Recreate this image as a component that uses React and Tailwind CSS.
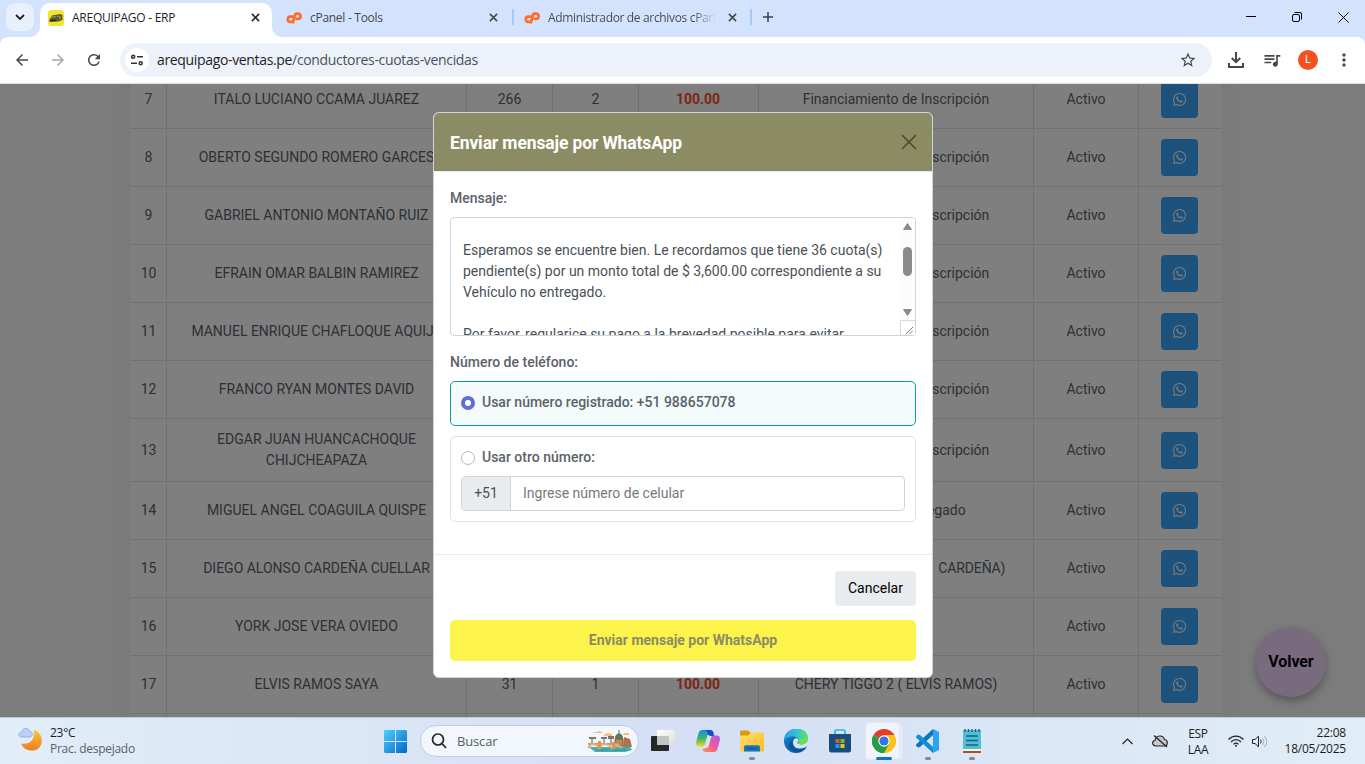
import React from "react";
import { FaWhatsapp } from "react-icons/fa";
import { MdStarBorder, MdQueueMusic, MdMoreVert, MdRefresh, MdArrowBack, MdArrowForward } from "react-icons/md";

const INS = "Financiamiento de Inscripción";

const rows = [
  { n: 7, name: "ITALO LUCIANO CCAMA JUAREZ", code: "266", due: "2", amount: "100.00", item: INS },
  { n: 8, name: "OBERTO SEGUNDO ROMERO GARCES", item: INS },
  { n: 9, name: "GABRIEL ANTONIO MONTAÑO RUIZ", item: INS },
  { n: 10, name: "EFRAIN OMAR BALBIN RAMIREZ", item: INS },
  { n: 11, name: "MANUEL ENRIQUE CHAFLOQUE AQUIJE", item: INS },
  { n: 12, name: "FRANCO RYAN MONTES DAVID", item: INS },
  { n: 13, name: "EDGAR JUAN HUANCACHOQUE CHIJCHEAPAZA", item: INS, tall: true },
  { n: 14, name: "MIGUEL ANGEL COAGUILA QUISPE", item: "Vehículo no entregado" },
  { n: 15, name: "DIEGO ALONSO CARDEÑA CUELLAR", item: "CHERY TIGGO 2 (DIEGO  CARDEÑA)", tight: true },
  { n: 16, name: "YORK JOSE VERA OVIEDO", item: "" },
  { n: 17, name: "ELVIS RAMOS SAYA", code: "31", due: "1", amount: "100.00", item: "CHERY TIGGO 2 ( ELVIS RAMOS)" },
];

function Close({ className }) {
  return (
    <svg viewBox="0 0 10 10" className={className} fill="none" stroke="currentColor" strokeWidth="1.7">
      <path d="M1 1l8 8M9 1l-8 8" />
    </svg>
  );
}

function CpanelLogo({ className }) {
  return (
    <svg viewBox="0 0 16 12" className={className} fill="none" stroke="#ff6c2c" strokeWidth="2.700" strokeLinecap="round" strokeLinejoin="round">
      <path d="M6.600 4.600H4.200a2.700 2.700 0 0 0-.4 5.300h1.700" />
      <path d="M7 10.300L9 2.600Q9.300 1.700 10.300 1.700h1.600a2.600 2.600 0 0 1 .2 5.200h-1.400" />
    </svg>
  );
}

function TabStrip() {
  return (
    <div className="flex h-[37px] shrink-0 bg-[#d3e3fd] font-['Open_Sans',sans-serif] text-[12px] text-[#45474a]">
      <div className="ml-[6px] mt-[3px] flex h-7 w-7 items-center justify-center rounded-[9px] bg-[#e9f0fd] text-[#1f1f1f]">
        <svg viewBox="0 0 10 6" className="h-[6px] w-[10px]" fill="none" stroke="currentColor" strokeWidth="1.8">
          <path d="M1 1l4 4 4-4" />
        </svg>
      </div>
      <div className="relative ml-[6px] mt-[3px] flex h-[34px] w-[232px] items-center rounded-t-[10px] bg-white pb-[5px] text-[#1f1f1f]">
        <svg className="absolute -left-[10px] bottom-0 h-[10px] w-[10px]" viewBox="0 0 10 10"><path d="M10 0v10H0A10 10 0 0 0 10 0z" fill="#fff" /></svg>
        <svg className="absolute -right-[10px] bottom-0 h-[10px] w-[10px]" viewBox="0 0 10 10"><path d="M0 0v10h10A10 10 0 0 1 0 0z" fill="#fff" /></svg>
        <svg className="ml-2 h-4 w-4" viewBox="0 0 16 16">
          <rect width="16" height="16" rx="3" fill="#f2e530" />
          <path d="M1.500 9.500L4 5.500l8-1.500 2.500 1v5l-4 1.500-9 .5z" fill="#5b5a35" />
          <path d="M3.500 8l2-2M6.500 7.500l1-1.500M9.500 7l1-1.500M12 9V6" stroke="#c9c36a" strokeWidth=".9" />
          <path d="M2 10.500h6" stroke="#222" strokeWidth="1.200" />
        </svg>
        <span className="ml-2 whitespace-nowrap tracking-[-0.26px]">AREQUIPAGO - ERP</span>
        <Close className="ml-auto mr-[12px] h-[9px] w-[9px]" />
      </div>
      <div className="flex h-[35px] w-[240px] items-center">
        <CpanelLogo className="ml-[14px] h-3 w-4" />
        <span className="ml-2 whitespace-nowrap tracking-[-0.28px]">cPanel - Tools</span>
        <Close className="ml-auto mr-[14px] h-[9px] w-[9px]" />
      </div>
      <div className="mt-[9px] h-4 w-[2px] bg-[#a8c7fa]" />
      <div className="flex h-[35px] w-[236px] items-center">
        <CpanelLogo className="ml-[10px] h-3 w-4" />
        <span className="ml-2 w-[168px] overflow-hidden whitespace-nowrap bg-gradient-to-r from-[#45474a] from-[86%] to-transparent bg-clip-text tracking-[-0.34px] text-transparent">Administrador de archivos cPan</span>
        <Close className="ml-[12px] h-[9px] w-[9px]" />
      </div>
      <div className="mt-[9px] h-4 w-[2px] bg-[#a8c7fa]" />
      <svg className="ml-[11px] mt-[12px] h-[10px] w-[10px]" viewBox="0 0 10 10" stroke="#3c4043" strokeWidth="1.500"><path d="M5 0v10M0 5h10" /></svg>
      <div className="ml-auto mr-[16px] flex h-[34px] items-center gap-[36px] text-black">
        <svg className="h-[10px] w-[10px]" viewBox="0 0 10 10" stroke="currentColor"><path d="M0 4.500h10" /></svg>
        <svg className="h-[10px] w-[10px]" viewBox="0 0 10 10" stroke="currentColor" fill="none"><rect x=".5" y="2.500" width="7" height="7" rx="1.500" /><path d="M2.500.5H8A1.500 1.500 0 0 1 9.500 2v5.500" /></svg>
        <svg className="h-[11px] w-[11px]" viewBox="0 0 11 11" stroke="currentColor"><path d="M.5.5l10 10M10.500.5l-10 10" /></svg>
      </div>
    </div>
  );
}

function Toolbar() {
  return (
    <div className="h-[47px] shrink-0 bg-[#d3e3fd]">
      <div className="flex h-full items-center rounded-t-[8px] border-b border-[#dcdde0] bg-white text-[#45484b]">
        <MdArrowBack className="ml-[13px] h-[18px] w-[18px]" />
        <MdArrowForward className="ml-[18px] h-[18px] w-[18px] text-[#a6a7a9]" />
        <MdRefresh className="ml-[18px] h-[18px] w-[18px]" />
        <div className="ml-[17px] flex h-[34px] w-[1092px] items-center rounded-full bg-[#ecf1fa]">
          <div className="ml-[5px] flex h-6 w-6 items-center justify-center rounded-full bg-white">
            <svg className="h-3 w-3" viewBox="0 0 12 12" fill="none" stroke="#333" strokeWidth="1.500">
              <circle cx="2.200" cy="2.800" r="1.500" /><path d="M6 2.800h6M0 9.200h6" /><circle cx="9.700" cy="9.200" r="1.500" />
            </svg>
          </div>
          <span className="ml-2 whitespace-nowrap pb-px font-['Open_Sans',sans-serif] text-[14px] tracking-[-0.34px] text-[#4d5156]">
            <span className="text-[#1f1f1f]">arequipago-ventas.pe</span>/conductores-cuotas-vencidas
          </span>
          <MdStarBorder className="ml-auto mr-[15px] h-[18px] w-[18px]" />
        </div>
        <svg className="ml-[16px] h-4 w-4" viewBox="0 0 16 16" fill="none" stroke="currentColor" strokeWidth="2">
          <path d="M8 0v10M3.800 6L8 10.200 12.200 6M1 11v4h14v-4" />
        </svg>
        <MdQueueMusic className="ml-[18px] h-5 w-5" />
        <div className="ml-[16px] flex h-5 w-5 items-center justify-center rounded-full bg-[#f4511e] font-[Roboto,sans-serif] text-[11px] text-white">L</div>
        <MdMoreVert className="ml-[16px] h-5 w-5" />
      </div>
    </div>
  );
}

function Cell({ children, className = "" }) {
  return <div className={`flex h-full items-center justify-center border-r border-[#dee2e6] text-center ${className}`}>{children}</div>;
}

function DebtTable() {
  return (
    <div className="ml-[130px] w-[1092px] bg-white pl-px pr-px shadow-[0_0_13px_0_rgba(236,236,241,0.9)]">
      <div className="flex flex-col font-[Roboto,sans-serif] text-[14px] leading-[21px] text-[#5b626b]">
        {rows.map((r) => (
          <div key={r.n} className={`grid grid-cols-[36px_300px_86px_86px_120px_275px_105px_82px] items-center border-b border-[#dee2e6] ${r.tall ? "h-[63px]" : "h-[58px]"}`}>
            <Cell>{r.n}</Cell>
            <Cell className={r.tall ? "px-[40px]" : "whitespace-nowrap"}>{r.name}</Cell>
            <Cell>{r.code}</Cell>
            <Cell>{r.due}</Cell>
            <Cell className="pr-px font-bold text-[#ff4a2a]">{r.amount}</Cell>
            <Cell className={r.tight ? "whitespace-pre tracking-[-0.13px]" : ""}>{r.item}</Cell>
            <Cell>Activo</Cell>
            <div className="flex justify-center pr-px">
              <div className={`flex h-[37px] w-[37px] items-center justify-center rounded-[4px] bg-[#38a4f8] text-[#f4f4f4] ${r.tall ? "" : "mb-px"}`}>
                <FaWhatsapp className="h-[15px] w-[15px]" />
              </div>
            </div>
          </div>
        ))}
        <div className="grid h-[58px] grid-cols-[36px_300px_86px_86px_120px_275px_105px_82px]">
          <Cell /><Cell /><Cell /><Cell /><Cell /><Cell /><Cell />
        </div>
      </div>
    </div>
  );
}

function MessageBox() {
  return (
    <div className="mt-[8px] flex h-[119px] overflow-hidden rounded-[4px] border border-[#ced4da] bg-white">
      <div className="flex-1 whitespace-nowrap pl-3 pt-[22px] text-[14px] leading-[21px] text-[#495057]">
        <p>Esperamos se encuentre bien. Le recordamos que tiene 36 cuota(s)</p>
        <p>pendiente(s) por un monto total de $ 3,600.00 correspondiente a su</p>
        <p>Vehículo no entregado.</p>
        <p className="mt-[21px]">Por favor, regularice su pago a la brevedad posible para evitar</p>
      </div>
      <div className="flex w-[15px] flex-col items-center bg-[#fcfcfc]">
        <svg className="mt-[5px] h-[7px] w-[9px]" viewBox="0 0 9 7"><path d="M4.500 0.500L8.500 6.500h-8z" fill="#8b8b8b" stroke="#8b8b8b" strokeLinejoin="round" /></svg>
        <div className="mt-[17px] h-[29px] w-[9px] rounded-full bg-[#8b8b8b]" />
        <svg className="mt-[33px] h-[7px] w-[9px]" viewBox="0 0 9 7"><path d="M4.500 6.500L.5.5h8z" fill="#8b8b8b" stroke="#8b8b8b" strokeLinejoin="round" /></svg>
        <div className="mt-[4px] h-[15px] w-[15px] border-l border-t border-[#d9d9d9] bg-white">
          <svg className="ml-[5px] mt-[6px] h-[7px] w-[7px]" viewBox="0 0 8 8" stroke="#555" strokeWidth=".9"><path d="M0 8L8 0M4 8l4-4" /></svg>
        </div>
      </div>
    </div>
  );
}

function Modal() {
  return (
    <div className="absolute left-[433px] top-[28px] h-[566px] w-[500px] overflow-hidden rounded-[6px] border border-[#d4d5d6] bg-white font-[Roboto,sans-serif] text-[14px] leading-[21px] text-[#5b626b]">
      <div className="flex h-[59px] items-center justify-between border-b border-[#e9ecef] bg-[#8b8c64] pl-4 pr-[15px]">
        <h5 className="whitespace-nowrap pt-[2px] text-[17.500px] font-bold tracking-[-0.13px] text-white">Enviar mensaje por WhatsApp</h5>
        <svg className="h-4 w-4" viewBox="0 0 16 16" stroke="#46472f" strokeWidth="1.500" strokeLinecap="round"><path d="M1.500 1.500l13 13M14.500 1.500l-13 13" /></svg>
      </div>
      <div className="px-4 pt-4">
        <div className="font-medium">Mensaje:</div>
        <MessageBox />
        <div className="mt-4 font-medium">Número de teléfono:</div>
        <div className="mt-2 flex h-[45px] items-start rounded-[5px] border border-[#02a499] bg-[#f5fbfa] pl-[10px] pt-[10px]">
          <div className="mt-[4px] h-[14px] w-[14px] rounded-full border-4 border-[#626ed4] bg-white" />
          <span className="ml-[7px] font-medium">Usar número registrado: +51 988657078</span>
        </div>
        <div className="mt-[10px] h-[86px] rounded-[5px] border border-[#dee2e6] p-[10px]">
          <div className="flex">
            <div className="mt-[4px] h-[14px] w-[14px] rounded-full border border-[#b9bbbd] bg-white" />
            <span className="ml-[7px] font-medium">Usar otro número:</span>
          </div>
          <div className="mt-[8px] flex h-[35px] overflow-hidden rounded-[4px] border border-[#ced4da]">
            <div className="flex w-[49px] items-center justify-center border-r border-[#ced4da] bg-[#e9ecef] text-[#495057]">+51</div>
            <div className="flex items-center pl-3 text-[#74797e]">Ingrese número de celular</div>
          </div>
        </div>
      </div>
      <div className="mt-8 border-t border-[#e9ecef] px-4 pt-4">
        <div className="ml-auto flex h-[35px] w-[81px] items-center justify-center rounded-[4px] bg-[#e9ecef] text-black">Cancelar</div>
        <div className="mt-[14px] flex h-[41px] items-center justify-center rounded-[5px] bg-[#fcf34b] font-bold text-[#8b8c64]">Enviar mensaje por WhatsApp</div>
      </div>
    </div>
  );
}

function WeatherIcon() {
  return (
    <svg className="h-6 w-6" viewBox="0 0 24 24">
      <defs><linearGradient id="moon" x1="0" y1="0" x2="0" y2="1"><stop offset="0" stopColor="#fbc63d" /><stop offset="1" stopColor="#ee7d1e" /></linearGradient></defs>
      <path d="M15.500 2c10.500 2 11 17 2 20C11.500 24 5 21 3 15.500c9 2 14.500-4.500 12.500-13.500z" fill="url(#moon)" />
      <path d="M3.500 9C-.5 8.500 .5 4.300 3.500 4.500 5-1 10-.8 11 3c4 .2 4.500 5.500 1 6z" fill="#b9d0f5" stroke="#789fe5" strokeWidth=".7" />
    </svg>
  );
}

function SearchArt() {
  return (
    <svg className="h-[23px] w-[46px]" viewBox="0 0 46 23">
      <path d="M7 2h3l2-1 3 1v1H7zM17 5l3-2 5 1v2h-8zM37 3h5v2h-6z" fill="#f8bc78" />
      <path d="M2 17h41l2 3-7 2H8z" fill="#48aeb5" />
      <path d="M5 15V8M17 15V8M24 14V8" stroke="#665448" />
      <path d="M2 7h7v2H2zM14 7h6v2h-6zM21 6h6v3h-6z" fill="#7b776b" />
      <path d="M28 16V8c0-6 8-6 8 0v8z" fill="#557b58" /><path d="M32 0v4M28 9h8v7h-8z" stroke="#796044" fill="#c48355" />
      <path d="M37 7l6 2 2 8H36z" fill="#b86a50" /><path d="M1 13h30v2H1z" fill="#cf9676" />
      <path d="M1 18c3-5 8-5 11 0 3-5 9-5 13 0 3-4 6-4 9 0" fill="none" stroke="#e4b278" strokeWidth="2" />
      <path d="M11 11h3v9h-3zM25 12h3v8h-3z" fill="#d99956" /><path d="M10 20h12M25 20h14" stroke="#2c939d" />
      <circle cx="41" cy="15" r="2" fill="#6c9951" />
    </svg>
  );
}

function TaskIcon({ children, dot }) {
  return (
    <div className="relative flex h-[47px] w-[44px] shrink-0 items-center justify-center">
      {children}
      {dot && <div className="absolute bottom-[5px] left-[19px] h-[3px] w-[6px] rounded-full bg-[#858991]" />}
    </div>
  );
}

function Taskbar() {
  return (
    <div className="flex h-[47px] shrink-0 items-center border-t border-[#bfc9d8] bg-gradient-to-r from-[#e1edf7] via-[#d5dff5] to-[#e1edf6] font-['Open_Sans',sans-serif] text-[12px] text-[#1c1c1c]">
      <div className="flex w-[373px] items-center pl-[18px] pb-[2px]">
        <WeatherIcon />
        <div className="ml-[8px] pt-[2px] leading-[16px] tracking-[-0.27px]"><div>23°C</div><div className="text-[#5c6066]">Prac. despejado</div></div>
      </div>
      <TaskIcon>
        <svg className="h-[23px] w-[23px]" viewBox="0 0 23 23">
          <defs><linearGradient id="win" x1="0" y1="0" x2="1" y2="1"><stop stopColor="#4fd0fb" /><stop offset="1" stopColor="#0067c9" /></linearGradient></defs>
          <path d="M1 0h10v11H0V1a1 1 0 0 1 1-1zM12 0h10l1 1v10H12zM0 12h11v11H1l-1-1zM12 12h11v10l-1 1H12z" fill="url(#win)" />
        </svg>
      </TaskIcon>
      <div className="ml-[3px] flex h-[32px] w-[219px] items-center rounded-full border border-[#c3cde1] bg-[#f2f6fd] text-[13px] text-[#5a5d62]">
        <svg className="ml-[10px] h-4 w-4" viewBox="0 0 16 16" fill="none" stroke="#242424" strokeWidth="1.700"><circle cx="7" cy="6.500" r="5.500" /><path d="M11 10.500l4 4.500" /></svg>
        <span className="ml-[10px] pt-[2px] tracking-[-0.15px]">Buscar</span>
        <div className="ml-auto mr-[5px]"><SearchArt /></div>
      </div>
      <div className="ml-px flex">
        <TaskIcon>
          <svg className="ml-px h-6 w-6" viewBox="0 0 24 24"><defs><linearGradient id="tv" x2="1" y2="1"><stop stopColor="#fff" /><stop offset="1" stopColor="#ddd" /></linearGradient></defs><rect x="0" y="7" width="18" height="15" rx="1" fill="#272727" /><rect x="6" y="1" width="18" height="15" rx="1" fill="url(#tv)" /><path d="M6 7h12v9H6z" fill="#c2c3c5" /></svg>
        </TaskIcon>
        <div className="w-[2px]" />
        <TaskIcon>
          <svg className="h-6 w-6" viewBox="0 0 24 24">
            <defs>
              <linearGradient id="cpa" x1="0" y1="0" x2="0" y2="1"><stop stopColor="#158ee8" /><stop offset=".5" stopColor="#3ab66b" /><stop offset="1" stopColor="#f5d62a" /></linearGradient>
              <linearGradient id="cpb" x1="1" y1="0" x2="0" y2="1"><stop stopColor="#a85af0" /><stop offset=".55" stopColor="#f25c92" /><stop offset="1" stopColor="#fb9a45" /></linearGradient>
            </defs>
            <path d="M6 1h8c2 0 3 1 3.500 3L14 5c-2 0-2.500 1-3 3l-2 7c-.6 2-1.500 2.500-3 2.500H3c-3 0-3.500-3-2.500-6l2-7C3 2.500 4 1 6 1z" fill="url(#cpa)" />
            <path d="M8 1h6c2 0 3 1 3.500 3l.8 3H15c-2 0-3-1-3.500-3C11 2 10 1 8 1z" fill="#1650c7" />
            <path d="M18 23h-8c-2 0-3-1-3.500-3L10 19c2 0 2.500-1 3-3l2-7c.6-2 1.500-2.500 3-2.500h3c3 0 3.500 3 2.500 6l-2 7c-.5 2-1.500 3.500-3.500 3.500z" fill="url(#cpb)" />
          </svg>
        </TaskIcon>
        <TaskIcon dot>
          <svg className="h-6 w-6" viewBox="0 0 24 24"><defs><linearGradient id="fol" x2="1" y2="1"><stop stopColor="#ffdf72" /><stop offset="1" stopColor="#fbbb20" /></linearGradient></defs><path d="M0 3q0-1.500 1.500-1.500H8L11 4v4H0z" fill="#dc9900" /><path d="M0 6.500h8L11 3.500h13V21q0 1.500-1.500 1.500h-21Q0 22.500 0 21z" fill="url(#fol)" /><path d="M4 22.500V18q0-1.800 2-1.800h12q2 0 2 1.800v4.500z" fill="#1476bd" /><path d="M7 19.500h10" stroke="#0c559d" strokeWidth="1.300" /></svg>
        </TaskIcon>
        <TaskIcon>
          <svg className="h-6 w-6" viewBox="0 0 24 24"><defs><linearGradient id="ed" x2="1"><stop stopColor="#249ee7" /><stop offset=".55" stopColor="#35c4d4" /><stop offset="1" stopColor="#62e34e" /></linearGradient><linearGradient id="ee" x2="1" y2="1"><stop stopColor="#1687cf" /><stop offset="1" stopColor="#0b4c92" /></linearGradient></defs><circle cx="12" cy="12" r="12" fill="url(#ee)" /><path d="M0 12C0-4 24-4 24 9c0 5-5 8-10 5.500 2-3 0-7-5-7C4 7.500 1 10 0 12z" fill="url(#ed)" /><path d="M24 9c0 5-5 8-10 5.500-1.500-.7.500-1.500.3-3.500C14 9 10 8 9 13c0 7 7 8 13 5l2-2z" fill="#d8e2f5" /><path d="M24 9c0 5-5 7.500-9.500 5.500-1-.7.400-1.500 0-4z" fill="#62e34e" opacity=".9" /><path d="M9 11c-3 5 2 10 8 9 3-.3 4.500-2 5.500-1.500C19 24 9 26 5 18c-1-3 1-6 4-7z" fill="#0c549b" /></svg>
        </TaskIcon>
        <TaskIcon>
          <svg className="h-6 w-6" viewBox="0 0 24 24"><path d="M7 6V2q0-1 1-1h8q1 0 1 1v4" fill="none" stroke="#31b5ed" strokeWidth="1.700" /><path d="M1 5h22v16q0 2.500-2.500 2.500h-17Q1 23.500 1 21z" fill="#164c80" /><path d="M7.500 10h4v4h-4z" fill="#f25325" /><path d="M12.500 10h4v4h-4z" fill="#80bc08" /><path d="M7.500 15h4v4h-4z" fill="#06a6f0" /><path d="M12.500 15h4v4h-4z" fill="#ffba08" /></svg>
        </TaskIcon>
        <TaskIcon>
          <div className="absolute left-[5px] top-[4px] h-[38px] w-[36px] rounded-[4px] border border-[#dce2ef] bg-[#e6ecf9]" />
          <div className="absolute left-[3px] top-[4px] h-[38px] w-[35px] rounded-[4px] border border-[#e1e5ef] bg-[#f0f4fd]" />
          <svg className="relative h-6 w-6" viewBox="0 0 24 24"><path d="M12 12L1.600 6A12 12 0 0 1 22.400 6z" fill="#e33b2e" /><path d="M12 12l10.400-6A12 12 0 0 1 12 24z" fill="#fbc116" /><path d="M12 12v12A12 12 0 0 1 1.600 6z" fill="#269b48" /><path d="M12 6h10.400L17 15l-5 9z" fill="#fbc116" /><path d="M1.600 6L7 15l5 3 5-3-5 9A12 12 0 0 1 1.600 6z" fill="#269b48" /><circle cx="12" cy="12" r="5.700" fill="#fff" /><circle cx="12" cy="12" r="4.600" fill="#2f78e8" /></svg>
          <div className="absolute bottom-[5px] left-[14px] h-[3px] w-4 rounded-full bg-[#0078d4]" />
        </TaskIcon>
        <TaskIcon dot>
          <svg className="h-6 w-6" viewBox="0 0 24 24"><path d="M17 0l6 3v18l-6 3z" fill="#29a6ef" /><path d="M17 0v6L4 18l-2 .5L0 16.500v-1z" fill="#0876b9" /><path d="M17 24v-6L4 6l-2-.5L0 7.500v1z" fill="#138ed5" /></svg>
        </TaskIcon>
        <TaskIcon dot>
          <svg className="h-6 w-6" viewBox="0 0 24 24"><path d="M3 1h18v19H3z" fill="#50bfd5" /><path d="M5 0v3M8.500 0v3M12 0v3M15.500 0v3M19 0v3" stroke="#155f78" strokeWidth="1.300" /><path d="M6 7h12M6 11.500h12M6 16h12" stroke="#12647e" strokeWidth="1.500" /><path d="M3 20h18v2H3z" fill="#f7f3ed" /><path d="M3 22h18v1.500q0 .5-1 .5H4q-1 0-1-.5z" fill="#ad5519" /></svg>
        </TaskIcon>
      </div>
      <div className="ml-auto mr-[18px] flex items-center">
        <svg className="h-[7px] w-[11px]" viewBox="0 0 11 7" fill="none" stroke="#222" strokeWidth="1.200"><path d="M.5 6l5-5 5 5" /></svg>
        <svg className="ml-[19px] h-[14px] w-4" viewBox="0 0 16 14" fill="none" stroke="#222" strokeWidth="1.100"><path d="M4 12C0 12-.5 7 3 6.500 4 1 11 .5 12.500 5.500 16.500 6 16 12 12.500 12z" fill="#c6cacf" /><path d="M2 1.500L15 13" strokeWidth="1.300" /></svg>
        <div className="ml-[19px] w-[22px] pt-px text-center leading-[16px] tracking-[-0.3px]"><div>ESP</div><div>LAA</div></div>
        <svg className="ml-[19px] h-3 w-4" viewBox="0 0 16 12" fill="none" stroke="#222" strokeWidth="1.100"><path d="M.5 4.500c4.300-4.500 10.700-4.500 15 0M3 7c3-3.200 7-3.200 10 0M5.500 9.300c1.500-1.600 3.500-1.600 5 0" /><circle cx="8" cy="10.800" r="1" fill="#222" stroke="none" /></svg>
        <svg className="ml-[8px] h-[13px] w-4" viewBox="0 0 16 13" fill="none" stroke="#222"><path d="M.5 4.500H3L6.500 1.200v10.600L3 8.500H.5zM8.500 4.500q1.500 2 0 4" /><path d="M10.500 3q3 3.500 0 7M12.500 1q4.500 5.500 0 11" stroke="#a8aeb6" /></svg>
        <div className="ml-[14px] w-[65px] whitespace-nowrap pr-px text-right leading-[16px] tracking-[-0.22px]"><div>22:08</div><div>18/05/2025</div></div>
      </div>
    </div>
  );
}

export default function App() {
  return (
    <div className="flex h-[764px] w-[1365px] flex-col overflow-hidden">
      <TabStrip />
      <Toolbar />
      <main className="relative h-[633px] shrink-0 overflow-hidden bg-[#f8f8fa]">
        <div className="-mt-[13px]"><DebtTable /></div>
        <div className="absolute left-[1256px] top-[543px] flex h-[70px] w-[70px] items-center justify-center rounded-full bg-[#f2d7fc] font-[Roboto,sans-serif] text-[16px] font-bold tracking-[-0.1px] text-black shadow-[0_4px_8px_rgba(0,0,0,0.3)]">Volver</div>
        <div className="absolute inset-0 bg-black/50" />
        <Modal />
      </main>
      <Taskbar />
    </div>
  );
}
